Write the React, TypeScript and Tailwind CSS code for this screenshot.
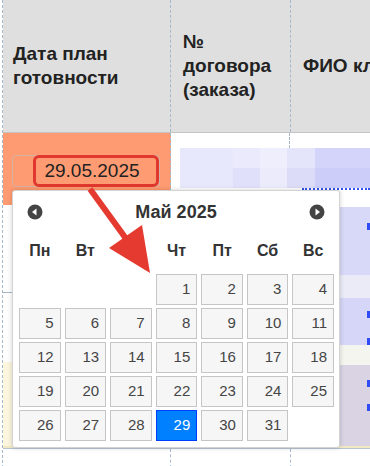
import React from 'react'

const WEEKDAYS = ['Пн', 'Вт', 'Ср', 'Чт', 'Пт', 'Сб', 'Вс']

// May 2025 starts on Thursday
const DAYS: (number | null)[] = [null, null, null, ...Array.from({ length: 31 }, (_, i) => i + 1)]
const SELECTED = 29

const NavIcon: React.FC<{ dir: 'prev' | 'next' }> = ({ dir }) => (
  <svg width="16" height="16" viewBox="0 0 16 16">
    <circle cx="8" cy="8" r="7.5" fill="#444" />
    {dir === 'prev' ? (
      <polygon points="5,8 9.5,4.5 9.5,11.5" fill="#fff" />
    ) : (
      <polygon points="11,8 6.5,4.5 6.5,11.5" fill="#fff" />
    )}
  </svg>
)

const BlueMark: React.FC<{ top: string }> = ({ top }) => (
  <div className={`ml-auto w-[3px] h-[7px] bg-[#2f4cf5] ${top}`} />
)

const DatePicker: React.FC = () => (
  <div className="absolute left-[12px] top-[190px] w-[328px] h-[258px] bg-white border border-[#d3d3d3] rounded-[3px] shadow-[0_0_5px_rgba(0,0,0,0.18)] px-[6px]">
    <div className="mt-[8px] h-[26px] px-[8px] flex items-center justify-between">
      <NavIcon dir="prev" />
      <span className="text-[18px] font-bold text-[#333]">Май 2025</span>
      <NavIcon dir="next" />
    </div>
    <div className="mt-[14px] h-[24px] w-[315px] grid grid-cols-7 gap-x-[4px] items-center">
      {WEEKDAYS.map((d) => (
        <span key={d} className="text-center text-[16px] font-bold text-[#333]">
          {d}
        </span>
      ))}
    </div>
    <div className="mt-[11px] w-[315px] grid grid-cols-7 gap-x-[4px] gap-y-[3px]">
      {DAYS.map((d, i) =>
        d === null ? (
          <div key={`e${i}`} className="h-[31px]" />
        ) : (
          <div
            key={d}
            className={`h-[31px] flex items-center justify-end pr-[6px] text-[15px] border ${
              d === SELECTED
                ? 'bg-[#007fff] border-[#003eff] text-white'
                : 'bg-[#f6f6f6] border-[#c5c5c5] text-[#454545]'
            }`}
          >
            {d}
          </div>
        )
      )}
    </div>
  </div>
)

const Arrow: React.FC = () => (
  <svg className="absolute left-0 top-0 pointer-events-none" width="370" height="466" viewBox="0 0 370 466">
    <line x1="90" y1="189" x2="127" y2="240" stroke="#e53a30" strokeWidth="6" />
    <polygon points="150,273 109,248 142,225" fill="#e53a30" />
  </svg>
)

export default function App() {
  return (
    <div className="relative w-[370px] h-[466px] overflow-hidden bg-white font-['Liberation_Sans',Arial,sans-serif]">
      <div className="ml-[2px] border-l border-dashed border-[#a5b8ca]">
        {/* header */}
        <div className="grid grid-cols-[168px_120px_1fr] h-[133px] bg-[#dfdfdf] border-b border-[#c4c4c4] text-[19px] font-bold leading-[24px] text-[#222]">
          <div className="flex items-center pl-[10px] border-r border-dashed border-[#a5b8ca]">
            <div>
              Дата план
              <br />
              готовности
            </div>
          </div>
          <div className="flex items-center pl-[12px] border-r border-dashed border-[#a5b8ca]">
            <div>
              №
              <br />
              договора
              <br />
              (заказа)
            </div>
          </div>
          <div className="flex items-center pl-[12px] whitespace-nowrap overflow-hidden">ФИО кл</div>
        </div>

        {/* row 1 */}
        <div className="grid grid-cols-[168px_1fr] h-[72px]">
          <div className="bg-[#ff9b72] border-r border-dashed border-[#a5b8ca] pt-[22px] pl-[9px]">
            <div className="w-[148px] h-[32px] rounded-[4px] border border-[#d4b2a2] flex justify-end">
              <div className="w-[126px] h-[32px] -mt-[1px] rounded-[6px] border-[3px] border-[#e0382e] flex items-center justify-center pr-[8px] text-[19px] text-[#222]">
                29.05.2025
              </div>
            </div>
          </div>
          <div className="pl-[9px]">
            <div className="h-[15px] grid grid-cols-[110px_1fr]">
              <div className="border-r border-dashed border-[#a5b8ca]" />
            </div>
            <div className="grid grid-cols-[53px_27px_27px_28px_1fr] h-[20px]">
              <div className="bg-[#e8e8fc]" />
              <div className="bg-[#eaeafc]" />
              <div className="bg-[#eeeefc]" />
              <div className="bg-[#e4e4fa]" />
              <div className="bg-[#d4d4fa]" />
            </div>
            <div className="grid grid-cols-[53px_27px_27px_28px_1fr] h-[20px]">
              <div className="bg-[#e8e8fc]" />
              <div className="bg-[#e0e0fa]" />
              <div className="bg-[#ebebfc]" />
              <div className="bg-[#dcdcf8]" />
              <div className="bg-[#cdcdfa]" />
            </div>
            <div className="ml-[122px] border-b-2 border-dotted border-[#3350f0]" />
          </div>
        </div>

        {/* row 2 */}
        <div className="grid grid-cols-[168px_120px_1fr] h-[88px]">
          <div className="bg-white border-b border-[#a5b8ca]" />
          <div />
          <div className="flex flex-col">
            <div className="h-[2px] bg-white" />
            <div className="h-[68px] bg-[#d8d8f8] flex flex-col">
              <BlueMark top="mt-[16px]" />
            </div>
            <div className="h-[18px] bg-[#ebebf8]" />
          </div>
        </div>

        {/* row 3 */}
        <div className="grid grid-cols-[168px_120px_1fr] h-[69px]">
          <div className="bg-white" />
          <div />
          <div className="flex flex-col">
            <div className="h-[5px] bg-[#ebebf8]" />
            <div className="h-[47px] bg-[#d6d6f8] flex flex-col">
              <BlueMark top="mt-[13px]" />
              <BlueMark top="mt-[20px]" />
            </div>
            <div className="h-[17px] bg-[#f5f5ef]" />
          </div>
        </div>

        {/* row 4 */}
        <div className="grid grid-cols-[168px_120px_1fr] h-[86px] border-b-2 border-[#f1e8c4]">
          <div className="bg-[#fcf6df]" />
          <div />
          <div className="flex flex-col">
            <div className="h-[3px] bg-[#f5f5ef]" />
            <div className="flex-1 bg-[#d9d3e3] flex flex-col">
              <BlueMark top="mt-[15px]" />
              <BlueMark top="mt-[17px]" />
            </div>
          </div>
        </div>

        {/* footer */}
        <div className="grid grid-cols-[168px_120px_1fr] h-[20px] border-t border-[#b7c4d2]">
          <div className="border-r border-dashed border-[#a5b8ca]" />
          <div className="border-r border-dashed border-[#a5b8ca]" />
          <div />
        </div>
      </div>

      <DatePicker />
      <Arrow />
    </div>
  )
}
